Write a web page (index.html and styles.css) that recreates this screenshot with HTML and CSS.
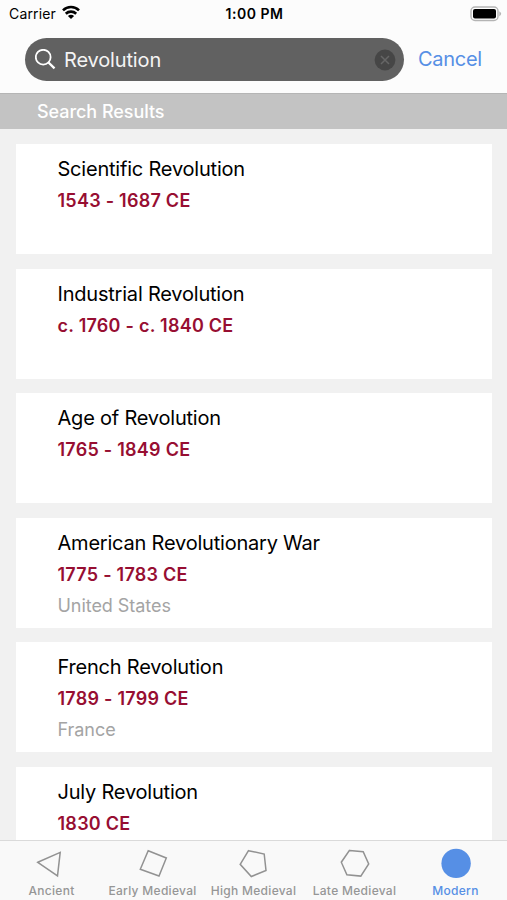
FILE: index.html
```html
<!DOCTYPE html>
<html lang="en">
  <head>
    <meta charset="utf-8">
    <meta name="viewport" content="width=device-width">
    <title>Search Results</title>
    <link rel="stylesheet" href="styles.css">
  </head>
  <body>
    <header>
      <div class="status">
        <div class="carrier">
          <span>Carrier</span>
          <svg width="18" height="14" viewBox="0 0 18 14" fill="none" stroke="#000" stroke-width="2.6">
            <path d="M1 5.3C5.4.9 12.6.9 17 5.3"/>
            <path d="M3.8 8.7C6.7 5.9 11.3 5.9 14.2 8.7"/>
            <path d="M9 14L5.9 10.9C7.6 9.3 10.4 9.3 12.1 10.9Z" fill="#000" stroke="none"/>
          </svg>
        </div>
        <b class="time">1:00 PM</b>
        <svg class="battery" width="32" height="16" viewBox="0 0 32 16">
          <rect x="1" y="1" width="27" height="13.5" rx="4" fill="#fff" stroke="#b4b4b4" stroke-width="1.4"/>
          <rect x="3" y="3" width="23" height="9.5" rx="2" fill="#000"/>
          <path d="M29.3 5.2Q33 7.8 29.3 10.4Z" fill="#b4b4b4"/>
        </svg>
      </div>
      <div class="search">
        <div class="field">
          <svg width="22" height="22" viewBox="0 0 22 22" fill="none" stroke="#fff">
            <circle cx="8.2" cy="8.2" r="7.4" stroke-width="1.8"/>
            <path d="M13.5 13.5L19.5 19.3" stroke-width="2.4"/>
          </svg>
          <span class="query">Revolution</span>
          <svg class="clear" width="22" height="22" viewBox="0 0 22 22">
            <circle cx="11" cy="11" r="10.4" fill="#464646"/>
            <path d="M7 7L15 15M15 7L7 15" stroke="#666" stroke-width="1.5"/>
          </svg>
        </div>
        <a class="cancel">Cancel</a>
      </div>
    </header>
    <h2>Search Results</h2>
    <main>
      <div class="card">
        <h3>Scientific Revolution</h3>
        <p class="date">1543 - 1687 CE</p>
      </div>
      <div class="card">
        <h3>Industrial Revolution</h3>
        <p class="date">c. 1760 - c. 1840 CE</p>
      </div>
      <div class="card">
        <h3>Age of Revolution</h3>
        <p class="date">1765 - 1849 CE</p>
      </div>
      <div class="card">
        <h3>American Revolutionary War</h3>
        <p class="date">1775 - 1783 CE</p>
        <p class="place">United States</p>
      </div>
      <div class="card">
        <h3>French Revolution</h3>
        <p class="date">1789 - 1799 CE</p>
        <p class="place">France</p>
      </div>
      <div class="card">
        <h3>July Revolution</h3>
        <p class="date">1830 CE</p>
      </div>
    </main>
    <nav>
      <div class="tab">
        <svg width="32" height="32" viewBox="0 0 32 32"><path d="M2.8 15.3L25.2 5.4L22.5 28.9Z"/></svg>
        <span>Ancient</span>
      </div>
      <div class="tab">
        <svg width="32" height="32" viewBox="0 0 32 32"><path d="M12.2 3.7L30.3 11L23 29L4.3 22.2Z"/></svg>
        <span>Early Medieval</span>
      </div>
      <div class="tab">
        <svg width="32" height="32" viewBox="0 0 32 32"><path d="M11.5 3.7L27.2 7L29 23.5L14.3 29.5L3.2 17.3Z"/></svg>
        <span>High Medieval</span>
      </div>
      <div class="tab">
        <svg width="32" height="32" viewBox="0 0 32 32"><path d="M11.5 3.4L25.2 4.8L30.7 17L22.8 29.1L8.9 27.8L3.3 15.2Z"/></svg>
        <span>Late Medieval</span>
      </div>
      <div class="tab active">
        <svg width="32" height="32" viewBox="0 0 32 32"><circle cx="17.1" cy="16.4" r="14.7"/></svg>
        <span>Modern</span>
      </div>
    </nav>
  </body>
</html>
```
FILE: styles.css
```css
* {
  margin: 0;
  padding: 0;
  box-sizing: border-box;
}
body {height: 900px;display: flex;flex-direction: column;overflow: hidden;background-color: #f1f1f1;font-family: Inter, "Liberation Sans", sans-serif;color: #000;}
svg {display: block;flex: none;}
header {height: 93px;flex: none;background-color: #fcfcfc;}
.status {height: 27px;display: grid;grid-template-columns: 1fr auto 1fr;align-items: center;padding: 0 7px 0 9px;font-size: 14px;}
.carrier {display: flex;align-items: center;gap: 6px;letter-spacing: .15px;}
.carrier svg {margin-top: -3px;}
.time {font-weight: 600;letter-spacing: .5px;}
.battery {justify-self: end;margin-right: -2px;}
.search {display: flex;align-items: center;padding: 11px 0 0 25px;}
.field {width: 379px;height: 43px;display: flex;align-items: center;padding: 1px 8px 0 10px;border-radius: 22px;background-color: #616161;}
.query {flex: 1;padding-left: 7px;font-size: 20px;letter-spacing: -.15px;color: #f4f4f4;}
.cancel {padding: 0 0 2px 14px;font-size: 20px;letter-spacing: -.3px;color: #568fe5;}
h2 {height: 36px;flex: none;padding-left: 37px;border-top: 1px solid #b5b5b5;background-color: #c3c3c3;font-size: 18px;font-weight: 500;line-height: 36px;letter-spacing: -.05px;color: #fff;}
main {flex: 1;min-height: 0;overflow: hidden;display: flex;flex-direction: column;gap: 14.6px;padding: 15px 15px 0 16px;}
.card {height: 110px;flex: none;padding: 10px 0 0 41.5px;background-color: #fff;}
h3 {font-size: 20px;font-weight: 400;line-height: 31px;letter-spacing: -.21px;}
.date {font-size: 18px;font-weight: 600;line-height: 32px;letter-spacing: .25px;color: #970e32;}
.place {font-size: 18px;line-height: 29px;letter-spacing: -.05px;color: #a4a4a4;}
nav {height: 60px;flex: none;display: grid;grid-template-columns: repeat(5, 101px);border-top: 1px solid #dadada;background-color: #f9f9f9;}
.tab {display: flex;flex-direction: column;align-items: center;padding-top: 6px;font-size: 12px;font-weight: 500;line-height: 14px;white-space: nowrap;color: #969696;letter-spacing: .3px;}
.tab span {padding: 5px 0 0 2px;}
.tab path {fill: none;stroke: #929292;stroke-width: 1.5;}
.active {color: #568fe5;}
.active circle {fill: #568fe5;}
```
